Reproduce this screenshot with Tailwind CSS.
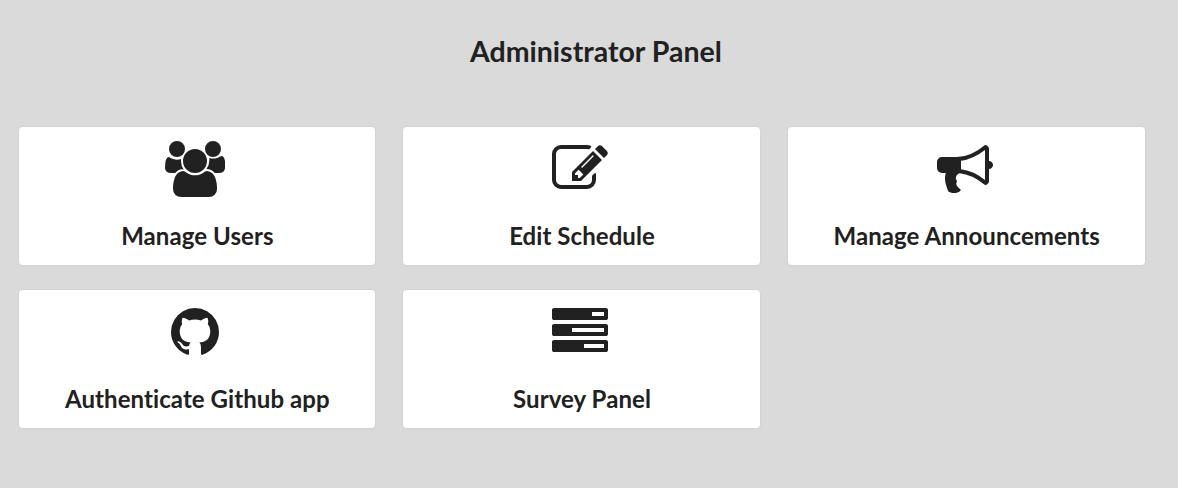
<!DOCTYPE html>
<html lang="en">
<head>
<meta charset="utf-8">
<title>Administrator Panel</title>
<script src="https://cdn.jsdelivr.net/npm/@tailwindcss/browser@4"></script>
</head>
<body class="min-h-screen bg-[#dadada] font-['Lato',sans-serif] text-[#212121]">
<main class="pt-[33px] pl-[18.67px] pr-[33.33px]">
  <h1 class="pl-[28.5px] text-center text-[28.5px] leading-[36px] font-bold [font-variant-ligatures:none]">Administrator Panel</h1>
  <div class="mt-[58px] grid grid-cols-3 gap-x-[28px] gap-y-[25px] tracking-[0.07px] [font-variant-ligatures:none]">
    <a class="flex h-[138px] flex-col items-center rounded bg-white pt-[14px] pl-[0.7px] shadow-[0_1px_3px_0_#d4d4d5,0_0_0_1px_#d4d4d5]">
      <svg class="mr-[4px] h-[56px] w-[60px] fill-current" viewBox="0 0 1920 1792"><path d="M593 896q-162 5-265 128h-134q-82 0-138-40.5t-56-118.5q0-353 124-353 6 0 43.5 21t97.5 42.5 119 21.5q67 0 133-23-5 37-5 66 0 159 93 290zm1071 637q0 120-73 189.5t-194 69.5h-874q-121 0-194-69.5t-73-189.5q0-53 3.5-103.5t14-109 26.5-108.5 43-97.5 62-81 85.5-53.5 111.5-20q10 0 43 21.5t73 48 107 48 135 21.5 135-21.5 107-48 73-48 43-21.5q61 0 111.5 20t85.5 53.5 62 81 43 97.5 26.5 108.5 14 109 3.5 103.5zm-1024-1277q0 106-75 181t-181 75-181-75-75-181 75-181 181-75 181 75 75 181zm704 384q0 159-112.5 271.5t-271.5 112.5-271.5-112.5-112.5-271.5 112.5-271.5 271.5-112.5 271.5 112.5 112.5 271.5zm576 225q0 78-56 118.5t-138 40.5h-134q-103-123-265-128 93-131 93-290 0-29-5-66 66 23 133 23 59 0 119-21.5t97.5-42.5 43.5-21q124 0 124 353zm-128-609q0 106-75 181t-181 75-181-75-75-181 75-181 181-75 181 75 75 181z"/></svg>
      <h2 class="mt-[23px] text-2xl leading-[32px] font-bold">Manage Users</h2>
    </a>
    <a class="flex h-[138px] flex-col items-center rounded bg-white pt-[14px] pl-[0.7px] shadow-[0_1px_3px_0_#d4d4d5,0_0_0_1px_#d4d4d5]">
      <svg class="mr-[4px] size-[56px] fill-current" viewBox="0 0 1792 1792"><path d="M888 1184l116-116-152-152-116 116v56h96v96h56zm440-720q-16-16-33 1l-350 350q-17 17-1 33t33-1l350-350q17-17 1-33zm80 594v190q0 119-84.5 203.5t-203.5 84.5h-832q-119 0-203.5-84.5t-84.5-203.5v-832q0-119 84.5-203.5t203.5-84.5h832q63 0 117 25 15 7 18 23 3 17-9 29l-49 49q-14 14-32 8-23-6-45-6h-832q-66 0-113 47t-47 113v832q0 66 47 113t113 47h832q66 0 113-47t47-113v-126q0-13 9-22l64-64q15-15 35-7t20 29zm-96-738l288 288-672 672h-288v-288zm444 132l-92 92-288-288 92-92q28-28 68-28t68 28l152 152q28 28 28 68t-28 68z"/></svg>
      <h2 class="mt-[23px] text-2xl leading-[32px] font-bold">Edit Schedule</h2>
    </a>
    <a class="flex h-[138px] flex-col items-center rounded bg-white pt-[14px] pl-[0.7px] shadow-[0_1px_3px_0_#d4d4d5,0_0_0_1px_#d4d4d5]">
      <svg class="mr-[4px] size-[56px] fill-current" viewBox="0 0 1792 1792"><path d="M1664 640q53 0 90.5 37.5t37.5 90.5-37.5 90.5-90.5 37.5v384q0 52-38 90t-90 38q-417-347-812-380-58 19-91 66t-31 100.5 40 92.5q-20 33-23 65.5t6 58 33.5 55 48 50 61.5 50.5q-29 58-111.5 83t-168.5 11.5-132-55.5q-7-23-29.5-87.5t-32-94.5-23-89-15-101 3.5-98.5 22-110.5h-122q-66 0-113-47t-47-113v-192q0-66 47-113t113-47h480q435 0 896-384 52 0 90 38t38 90v384zm-128 604v-954q-394 302-768 343v270q377 42 768 341z"/></svg>
      <h2 class="mt-[23px] text-2xl leading-[32px] font-bold">Manage Announcements</h2>
    </a>
    <a class="flex h-[138px] flex-col items-center rounded bg-white pt-[14px] pl-[0.7px] shadow-[0_1px_3px_0_#d4d4d5,0_0_0_1px_#d4d4d5]">
      <svg class="mr-[4px] size-[56px] fill-current" viewBox="0 0 1792 1792"><path d="M896 128q209 0 385.5 103t279.5 279.5 103 385.5q0 251-146.5 451.5t-378.5 277.5q-27 5-40-7t-13-30q0-3 .5-76.5t.5-134.5q0-97-52-142 57-6 102.5-18t94-39 81-66.5 53-105 20.5-150.5q0-119-79-206 37-91-8-204-28-9-81 11t-92 44l-38 24q-93-26-192-26t-192 26q-16-11-42.5-27t-83.5-38.5-85-13.5q-45 113-8 204-79 87-79 206 0 85 20.5 150t52.5 105 80.5 67 94 39 102.5 18q-39 36-49 103-21 10-45 15t-57 5-65.5-21.5-55.5-62.5q-19-32-48.5-52t-49.5-24l-20-3q-21 0-29 4.5t-5 11.5 9 14 13 12l7 5q22 10 43.5 38t31.5 51l10 23q13 38 44 61.5t67 30 69.5 7 55.5-3.5l23-4q0 38 .5 88.5t.5 54.5q0 18-13 30t-40 7q-232-77-378.5-277.5t-146.5-451.5q0-209 103-385.5t279.5-279.5 385.5-103z"/></svg>
      <h2 class="mt-[23px] text-2xl leading-[32px] font-bold">Authenticate Github app</h2>
    </a>
    <a class="flex h-[138px] flex-col items-center rounded bg-white pt-[14px] pl-[0.7px] shadow-[0_1px_3px_0_#d4d4d5,0_0_0_1px_#d4d4d5]">
      <svg class="mr-[4px] size-[56px] fill-current" viewBox="0 0 1792 1792"><path d="M1024 1408h640v-128h-640v128zm-384-512h1024v-128h-1024v128zm640-512h384v-128h-384v128zm512 832v256q0 26-19 45t-45 19h-1664q-26 0-45-19t-19-45v-256q0-26 19-45t45-19h1664q26 0 45 19t19 45zm0-512v256q0 26-19 45t-45 19h-1664q-26 0-45-19t-19-45v-256q0-26 19-45t45-19h1664q26 0 45 19t19 45zm0-512v256q0 26-19 45t-45 19h-1664q-26 0-45-19t-19-45v-256q0-26 19-45t45-19h1664q26 0 45 19t19 45z"/></svg>
      <h2 class="mt-[23px] text-2xl leading-[32px] font-bold">Survey Panel</h2>
    </a>
  </div>
</main>
</body>
</html>
